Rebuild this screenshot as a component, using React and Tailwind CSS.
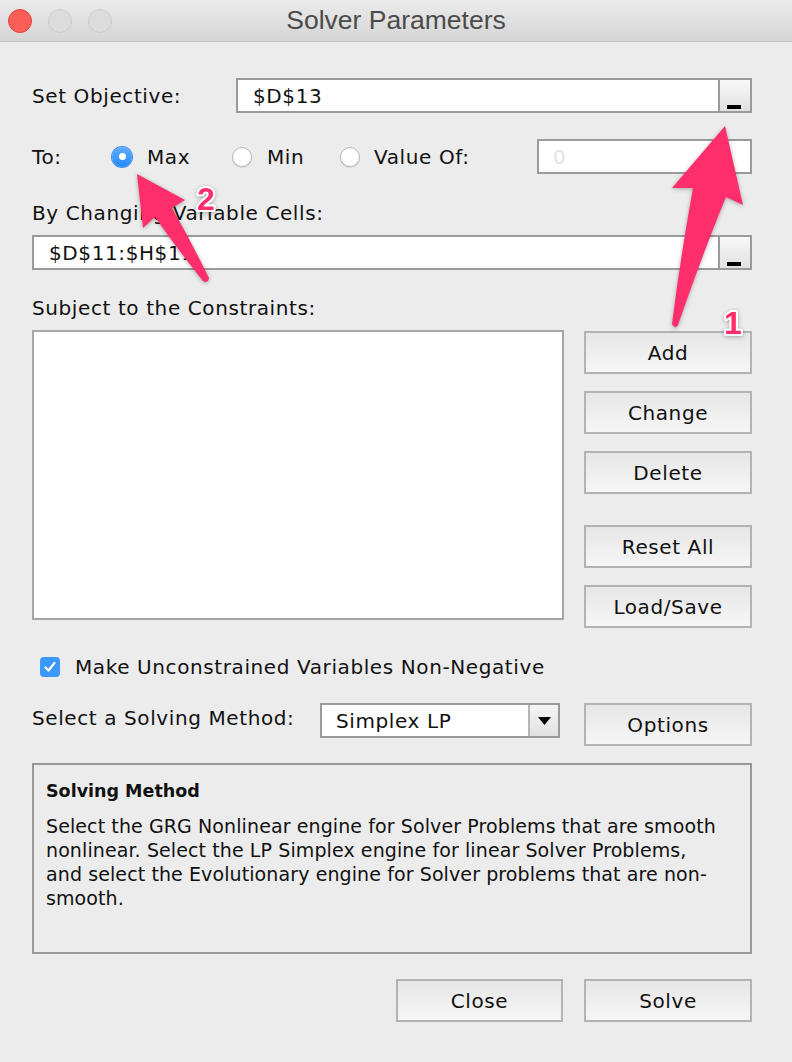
import React from 'react';

function RefInput({ value, className = '' }) {
  return (
    <div className={`flex h-[35px] border-2 border-[#9a9a9a] bg-white ${className}`}>
      <div className="flex-1 flex items-center pl-[15px]">{value}</div>
      <div className="w-[32px] border-l-2 border-[#9a9a9a] bg-linear-to-b from-[#f8f8f8] to-[#e1e1e1] flex items-end justify-center pb-[2px]">
        <div className="w-[14px] h-[4px] bg-black ml-[-2px]" />
      </div>
    </div>
  );
}

function Btn({ children, className = '' }) {
  return (
    <div className={`h-[43px] border-2 border-[#b3b3b3] bg-linear-to-b from-[#e6e6e6] to-[#f6f6f6] flex items-center justify-center ${className}`}>
      {children}
    </div>
  );
}

function Radio({ checked }) {
  if (checked) {
    return (
      <div className="w-[20px] h-[20px] shrink-0 rounded-full bg-linear-to-b from-[#5eacfd] to-[#2087fb] flex items-center justify-center shadow-[0_0_0_1px_#3a8ef0]">
        <div className="w-[7px] h-[7px] rounded-full bg-white" />
      </div>
    );
  }
  return <div className="w-[20px] h-[20px] shrink-0 rounded-full bg-white border border-[#b8b8b8] shadow-[0_1px_1px_rgba(0,0,0,0.12)]" />;
}

export default function App() {
  return (
    <div className="relative w-[792px] h-[1062px] overflow-hidden bg-[#ececec] text-[#111] font-['DejaVu_Sans',sans-serif]">
      {/* title bar */}
      <div className="relative h-[42px] border-b border-[#c4c4c4] bg-linear-to-b from-[#ebebeb] to-[#d5d5d5] flex items-center pl-[8px] gap-[16px]">
        <div className="w-[24px] h-[24px] rounded-full bg-[#fc5f57] border border-[#e0443e]" />
        <div className="w-[24px] h-[24px] rounded-full bg-[#dcdcdc] border border-[#cdcdcd]" />
        <div className="w-[24px] h-[24px] rounded-full bg-[#dcdcdc] border border-[#cdcdcd]" />
        <div className="absolute inset-0 flex items-center justify-center text-[26.5px] text-[#4b4b4b] font-['Liberation_Sans',sans-serif]">
          Solver Parameters
        </div>
      </div>

      <div className="pl-[32px] pr-[40px] text-[20px] tracking-[0.6px]">
        <div className="mt-[36px] flex items-center">
          <span className="w-[204px]">Set Objective:</span>
          <RefInput value="$D$13" className="flex-1" />
        </div>

        <div className="mt-[26px] flex items-center h-[35px]">
          <span className="w-[80px]">To:</span>
          <div className="w-[120px] flex items-center gap-[15px]">
            <Radio checked />
            <span>Max</span>
          </div>
          <div className="w-[108px] flex items-center gap-[15px]">
            <Radio />
            <span>Min</span>
          </div>
          <div className="flex-1 flex items-center gap-[14px]">
            <Radio />
            <span>Value Of:</span>
          </div>
          <div className="w-[215px] h-[35px] border-2 border-[#9a9a9a] bg-white flex items-center pl-[14px] text-[#e2e2e2]">0</div>
        </div>

        <div className="mt-[27px] leading-[24px]">By Changing Variable Cells:</div>
        <RefInput value="$D$11:$H$11" className="mt-[10px]" />

        <div className="mt-[26px] leading-[24px]">Subject to the Constraints:</div>
        <div className="mt-[10px] flex gap-[20px]">
          <div className="w-[532px] h-[290px] bg-white border-2 border-[#a5a5a5]" />
          <div className="w-[168px] flex flex-col mt-[1px]">
            <Btn>Add</Btn>
            <Btn className="mt-[17px]">Change</Btn>
            <Btn className="mt-[17px]">Delete</Btn>
            <Btn className="mt-[31px]">Reset All</Btn>
            <Btn className="mt-[17px]">Load/Save</Btn>
          </div>
        </div>

        <div className="mt-[27px] flex items-center h-[24px] pl-[8px] gap-[15px]">
          <div className="w-[20px] h-[20px] rounded-[4px] bg-[#3b99fc] flex items-center justify-center">
            <svg width="14" height="14" viewBox="0 0 14 14" fill="none">
              <path d="M2.5 7.5 L5.5 10.5 L11.5 3" stroke="white" strokeWidth="2.2" strokeLinecap="round" strokeLinejoin="round" />
            </svg>
          </div>
          <span>Make Unconstrained Variables Non-Negative</span>
        </div>

        <div className="mt-[24px] flex items-start">
          <span className="w-[288px] mt-[3px] leading-[24px]">Select a Solving Method:</span>
          <div className="w-[240px] h-[35px] border-2 border-[#9a9a9a] bg-white flex">
            <div className="flex-1 flex items-center pl-[14px]">Simplex LP</div>
            <div className="w-[30px] border-l-2 border-[#b5b5b5] bg-linear-to-b from-[#f4f4f4] to-[#e2e2e2] flex items-center justify-center">
              <svg width="13" height="8" viewBox="0 0 13 8">
                <path d="M0 0 H13 L6.5 8 Z" fill="black" />
              </svg>
            </div>
          </div>
          <Btn className="ml-[24px] w-[168px]">Options</Btn>
        </div>

        <div className="mt-[17px] h-[191px] border-2 border-[#999] pl-[12px] pr-[32px] pt-[14px] tracking-[0.1px]">
          <div className="font-bold text-[17.5px] tracking-normal leading-[24px]">Solving Method</div>
          <div className="mt-[11px] text-[19px] leading-[24px]">
            Select the GRG Nonlinear engine for Solver Problems that are smooth nonlinear. Select the LP Simplex engine for linear Solver Problems, and select the Evolutionary engine for Solver problems that are non-smooth.
          </div>
        </div>

        <div className="mt-[25px] flex justify-end gap-[21px]">
          <Btn className="w-[167px]">Close</Btn>
          <Btn className="w-[168px]">Solve</Btn>
        </div>
      </div>

      {/* annotation arrows */}
      <svg className="absolute inset-0 pointer-events-none drop-shadow-[0_1px_2px_rgba(0,0,0,0.3)]" width="792" height="1062" viewBox="0 0 792 1062">
        <path
          d="M725 126 L743 205 L726 197 Q704 250 678 325 Q675 330 672 324 Q680 260 693 188 L672 188 Z"
          fill="#fe2d6c"
        />
        <path
          d="M137 174 L185 200 L172 208 Q192 243 209 278 Q208 284 203 281 Q178 250 155 217 L143 228 Z"
          fill="#fe2d6c"
        />
        <text x="206" y="210" textAnchor="middle" fontSize="32" fontWeight="bold" fontFamily="Liberation Sans, sans-serif" fill="#fe2d6c" stroke="white" strokeWidth="4" strokeLinejoin="round" paintOrder="stroke">2</text>
        <text x="733" y="334" textAnchor="middle" fontSize="32" fontWeight="bold" fontFamily="Liberation Sans, sans-serif" fill="#fe2d6c" stroke="white" strokeWidth="4" strokeLinejoin="round" paintOrder="stroke">1</text>
      </svg>
    </div>
  );
}
